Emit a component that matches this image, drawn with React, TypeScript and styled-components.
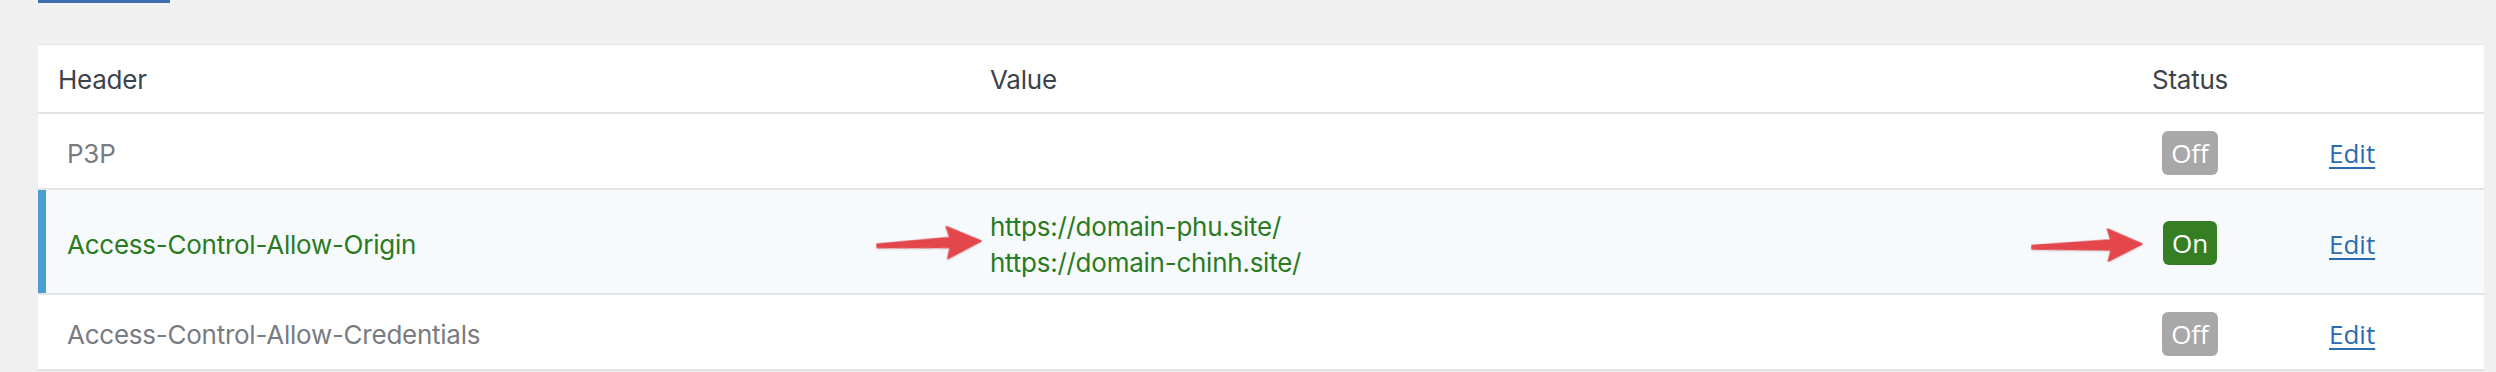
import React from "react";
import styled, { createGlobalStyle } from "styled-components";

const GlobalStyle = createGlobalStyle`
  html, body {
    margin: 0;
    padding: 0;
    background: #f0f0f0;
  }
  body {
    font-family: Inter, "Noto Sans", sans-serif;
  }
`;

const Page = styled.div`
  width: 2496px;
  height: 372px;
  box-sizing: border-box;
  padding: 0 12px 0 38px;
  overflow: hidden;
  background: #f0f0f0;
`;

const TabUnderline = styled.div`
  width: 132px;
  height: 3px;
  background: #3b6fb1;
  margin-bottom: 41px;
`;

const Table = styled.div`
  background: #ffffff;
  border-top: 1px solid #e6e6e6;
`;

const Row = styled.div<{ $active?: boolean }>`
  display: grid;
  grid-template-columns: 932px 1101px 238px 1fr;
  border-bottom: 2px solid #e2e3e5;
  background: ${(p) => (p.$active ? "#f6fafd" : "#ffffff")};
  box-shadow: ${(p) => (p.$active ? "inset 8px 0 0 #4b9ccf" : "none")};
`;

const Cell = styled.div<{ $center?: boolean; $first?: boolean }>`
  display: flex;
  align-items: center;
  justify-content: ${(p) => (p.$center ? "center" : "flex-start")};
  padding: 17px 20px 13px ${(p) => (p.$first ? "29px" : "20px")};
  font-size: 26px;
  line-height: 36.5px;
  letter-spacing: -0.25px;
  position: relative;
`;

const HeadText = styled.span`
  color: #3c434a;
`;

const NameText = styled.span<{ $on?: boolean }>`
  position: relative;
  top: 2px;
  color: ${(p) => (p.$on ? "#2b7a1f" : "#787c82")};
`;

const UrlList = styled.span`
  position: relative;
  top: 2px;
  display: inline-flex;
  flex-direction: column;
  color: #2b7a1f;
`;

const BadgeWrap = styled.span`
  position: relative;
  display: inline-flex;
`;

const Badge = styled.span<{ $on?: boolean }>`
  display: inline-flex;
  align-items: center;
  justify-content: center;
  height: 44px;
  padding: 0 9px;
  border-radius: 6px;
  background: ${(p) => (p.$on ? "#357e23" : "#a8a8a8")};
  color: #ffffff;
  font-family: "Open Sans", "Noto Sans", sans-serif;
  font-size: 26px;
  letter-spacing: 0;
  line-height: 1;
`;

const EditLink = styled.a`
  position: relative;
  top: 1px;
  font-family: "Open Sans", "Noto Sans", sans-serif;
  font-size: 26px;
  letter-spacing: 0;
  color: #2b6cb0;
  text-decoration: underline;
  text-underline-offset: 4px;
  text-decoration-thickness: 2px;
  cursor: pointer;
`;

const ArrowSvg = styled.svg<{ $gap: number; $dy: number; $angle: number }>`
  position: absolute;
  top: 50%;
  margin-top: -20px;
  right: calc(100% + ${(p) => p.$gap}px);
  transform-origin: 100% 50%;
  transform: translateY(${(p) => p.$dy}px) rotate(${(p) => p.$angle}deg);
  overflow: visible;
  filter: drop-shadow(0 1px 1px rgba(0, 0, 0, 0.12));
`;

const Arrow = ({ length, angle, gap, dy }: { length: number; angle: number; gap: number; dy: number }) => {
  const L = length;
  const head = 33;
  const hw = 16;
  const d = `M1,-1.7 L${L - head + 2},-5 L${L - head - 1},-${hw} L${L},0 L${L - head - 1},${hw} L${L - head + 2},5 L1,1.7 Z`;
  return (
    <ArrowSvg width={L} height={40} viewBox={`0 -20 ${L} 40`} $gap={gap} $dy={dy} $angle={angle}>
      <path d={d} fill="#e3474c" stroke="#e3474c" strokeWidth={1.5} strokeLinejoin="round" />
    </ArrowSvg>
  );
};

export default function App() {
  return (
    <>
      <GlobalStyle />
      <Page>
        <TabUnderline />
        <Table>
          <Row>
            <Cell>
              <HeadText>Header</HeadText>
            </Cell>
            <Cell>
              <HeadText>Value</HeadText>
            </Cell>
            <Cell $center>
              <HeadText>Status</HeadText>
            </Cell>
            <Cell />
          </Row>
          <Row>
            <Cell $first>
              <NameText>P3P</NameText>
            </Cell>
            <Cell />
            <Cell $center>
              <Badge>Off</Badge>
            </Cell>
            <Cell>
              <EditLink>Edit</EditLink>
            </Cell>
          </Row>
          <Row $active>
            <Cell $first>
              <NameText $on>Access-Control-Allow-Origin</NameText>
            </Cell>
            <Cell>
              <UrlList>
                <Arrow length={105} angle={-2.7} gap={9} dy={-4} />
                <span>https://domain-phu.site/</span>
                <span>https://domain-chinh.site/</span>
              </UrlList>
            </Cell>
            <Cell $center>
              <BadgeWrap>
                <Arrow length={111} angle={-1.7} gap={21} dy={1} />
                <Badge $on>On</Badge>
              </BadgeWrap>
            </Cell>
            <Cell>
              <EditLink>Edit</EditLink>
            </Cell>
          </Row>
          <Row>
            <Cell $first>
              <NameText>Access-Control-Allow-Credentials</NameText>
            </Cell>
            <Cell />
            <Cell $center>
              <Badge>Off</Badge>
            </Cell>
            <Cell>
              <EditLink>Edit</EditLink>
            </Cell>
          </Row>
        </Table>
      </Page>
    </>
  );
}
